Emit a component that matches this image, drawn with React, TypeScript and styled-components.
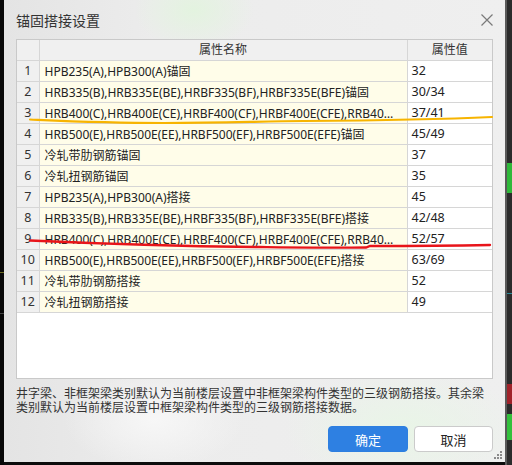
import React from "react";
import styled, { createGlobalStyle } from "styled-components";

const GlobalStyle = createGlobalStyle`
  html, body { margin: 0; padding: 0; background: #111; }
  body { font-family: "Noto Sans", "Noto Sans CJK SC", sans-serif; }
  * { box-sizing: border-box; }
`;

const Page = styled.div`
  display: flex;
  width: 512px;
  height: 465px;
  overflow: hidden;
  background: #0c0c0c;
`;

const LeftStrip = styled.div`
  width: 4px;
  height: 100%;
  background: #070707;
  display: flex;
  flex-direction: column;
`;

const Bit = styled.div<{ $h: number; $c: string }>`
  height: ${(p) => p.$h}px;
  background: ${(p) => p.$c};
  flex-shrink: 0;
`;

const RightStrip = styled.div`
  width: 7px;
  height: 100%;
  display: flex;
  flex-direction: column;
  background: #2b2b2b;
  border-left: 2px solid #5a5a5a;
`;

const Dialog = styled.div`
  position: relative;
  width: 501px;
  height: 462px;
  padding: 0 12px;
  display: flex;
  flex-direction: column;
  color: #222;
  background:
    radial-gradient(ellipse 60px 40px at 190px 10px, rgba(226, 244, 222, 0.9), rgba(226, 244, 222, 0) 100%),
    radial-gradient(ellipse 120px 60px at 400px 430px, rgba(232, 246, 230, 0.9), rgba(232, 246, 230, 0) 100%),
    radial-gradient(ellipse 90px 50px at 150px 420px, rgba(248, 248, 248, 0.9), rgba(248, 248, 248, 0) 100%),
    linear-gradient(90deg, #e4e4e4 0%, #ececec 30%, #efefef 100%);
`;

const TitleBar = styled.div`
  height: 39px;
  display: flex;
  align-items: center;
  justify-content: space-between;
`;

const Title = styled.div`
  font-size: 14px;
  color: #333;
  padding-top: 1px;
`;

const CloseButton = styled.div`
  width: 14px;
  height: 14px;
  margin-right: -1px;
  display: flex;
  align-items: center;
  justify-content: center;
  color: #7a7a7a;
`;

const TableFrame = styled.div`
  height: 340px;
  border: 1px solid #c9c9c9;
  background: #fff;
  overflow: hidden;
`;

const Grid = styled.table`
  width: 100%;
  border-collapse: collapse;
  table-layout: fixed;
  font-size: 12px;
`;

const HeadCell = styled.th`
  height: 20px;
  padding: 0;
  background: #f0f0f0;
  border-right: 1px solid #d6d6d6;
  border-bottom: 1px solid #d6d6d6;
  font-weight: normal;
  color: #333;
  text-align: center;
  line-height: 19px;
  &:last-child { border-right: none; }
`;

const NumCell = styled.td`
  height: 21px;
  padding: 0;
  background: #f0f0f0;
  border-right: 1px solid #d6d6d6;
  border-bottom: 1px solid #d6d6d6;
  text-align: center;
  color: #333;
  font-size: 12.5px;
`;

const NameCell = styled.td`
  padding: 0 7px 0 5px;
  background: #fffde9;
  border-right: 1px solid #d6d6d6;
  border-bottom: 1px solid #d6d6d6;
  color: #222;
  font-size: 12px;
  white-space: nowrap;
  overflow: hidden;
  text-overflow: ellipsis;
`;

const ValueCell = styled.td`
  padding: 0 4px;
  background: #fff;
  border-bottom: 1px solid #d6d6d6;
  color: #222;
  font-size: 12.5px;
`;

const Note = styled.div`
  margin-top: 8px;
  font-size: 12px;
  line-height: 14px;
  color: #333;
`;

const Footer = styled.div`
  margin-top: 11px;
  display: flex;
  justify-content: flex-end;
  gap: 6px;
`;

const Button = styled.button<{ $primary?: boolean }>`
  width: ${(p) => (p.$primary ? 80 : 79)}px;
  height: 26px;
  border-radius: 4px;
  font-family: inherit;
  font-size: 13px;
  cursor: pointer;
  border: 1px solid ${(p) => (p.$primary ? "#2d7fe0" : "#cbcbcb")};
  background: ${(p) => (p.$primary ? "#2e80e2" : "#fff")};
  color: ${(p) => (p.$primary ? "#fff" : "#222")};
`;

const Grip = styled.svg`
  position: absolute;
  right: 2px;
  bottom: 2px;
`;

const Markup = styled.svg`
  position: absolute;
  left: 0;
  top: 0;
  pointer-events: none;
`;

const rows: [string, string][] = [
  ["HPB235(A),HPB300(A)锚固", "32"],
  ["HRB335(B),HRB335E(BE),HRBF335(BF),HRBF335E(BFE)锚固", "30/34"],
  ["HRB400(C),HRB400E(CE),HRBF400(CF),HRBF400E(CFE),RRB400(D)锚固", "37/41"],
  ["HRB500(E),HRB500E(EE),HRBF500(EF),HRBF500E(EFE)锚固", "45/49"],
  ["冷轧带肋钢筋锚固", "37"],
  ["冷轧扭钢筋锚固", "35"],
  ["HPB235(A),HPB300(A)搭接", "45"],
  ["HRB335(B),HRB335E(BE),HRBF335(BF),HRBF335E(BFE)搭接", "42/48"],
  ["HRB400(C),HRB400E(CE),HRBF400(CF),HRBF400E(CFE),RRB400(D)搭接", "52/57"],
  ["HRB500(E),HRB500E(EE),HRBF500(EF),HRBF500E(EFE)搭接", "63/69"],
  ["冷轧带肋钢筋搭接", "52"],
  ["冷轧扭钢筋搭接", "49"],
];

export default function App() {
  return (
    <>
      <GlobalStyle />
      <Page>
        <LeftStrip>
          <Bit $h={272} $c="#070707" />
          <Bit $h={1} $c="#6b6a20" />
          <Bit $h={40} $c="#070707" />
          <Bit $h={1} $c="#444" />
        </LeftStrip>
        <Dialog>
          <TitleBar>
            <Title>锚固搭接设置</Title>
            <CloseButton>
              <svg width="12" height="12" viewBox="0 0 12 12">
                <path d="M0.5 0.5 L11.5 11.5 M11.5 0.5 L0.5 11.5" stroke="currentColor" strokeWidth="1.2" />
              </svg>
            </CloseButton>
          </TitleBar>
          <TableFrame>
            <Grid>
              <colgroup>
                <col style={{ width: 22 }} />
                <col style={{ width: 368 }} />
                <col />
              </colgroup>
              <thead>
                <tr>
                  <HeadCell />
                  <HeadCell>属性名称</HeadCell>
                  <HeadCell>属性值</HeadCell>
                </tr>
              </thead>
              <tbody>
                {rows.map(([name, value], i) => (
                  <tr key={i}>
                    <NumCell>{i + 1}</NumCell>
                    <NameCell>{name}</NameCell>
                    <ValueCell>{value}</ValueCell>
                  </tr>
                ))}
              </tbody>
            </Grid>
          </TableFrame>
          <Note>
            井字梁、非框架梁类别默认为当前楼层设置中非框架梁构件类型的三级钢筋搭接。其余梁类别默认为当前楼层设置中框架梁构件类型的三级钢筋搭接数据。
          </Note>
          <Footer>
            <Button $primary>确定</Button>
            <Button>取消</Button>
          </Footer>
          <Grip width="10" height="10" viewBox="0 0 10 10">
            <g fill="#8a8a8a">
              <rect x="7" y="1" width="2" height="2" />
              <rect x="4" y="4" width="2" height="2" />
              <rect x="7" y="4" width="2" height="2" />
              <rect x="1" y="7" width="2" height="2" />
              <rect x="4" y="7" width="2" height="2" />
              <rect x="7" y="7" width="2" height="2" />
            </g>
          </Grip>
          <Markup width="501" height="462" viewBox="0 0 501 462">
            <path
              d="M26 119.5 C60 121 100 123 160 123 C220 123 250 121.5 300 121 C360 120.5 420 120 488 117"
              stroke="#f7b400"
              strokeWidth="2.2"
              fill="none"
              strokeLinecap="round"
            />
            <path
              d="M26 240.5 C80 243 150 246 256 247 C300 247.5 340 248 362 247.5 L366 246 C420 246 460 245.5 486 245"
              stroke="#e8141a"
              strokeWidth="2.4"
              fill="none"
              strokeLinecap="round"
            />
          </Markup>
        </Dialog>
        <RightStrip>
          <Bit $h={163} $c="#2b2b2b" />
          <Bit $h={30} $c="#2fb83a" />
          <Bit $h={100} $c="#2b2b2b" />
          <Bit $h={1} $c="#2a8a9a" />
          <Bit $h={90} $c="#2b2b2b" />
          <Bit $h={20} $c="#a0222a" />
          <Bit $h={10} $c="#2b2b2b" />
          <Bit $h={26} $c="#33c03c" />
        </RightStrip>
      </Page>
    </>
  );
}
